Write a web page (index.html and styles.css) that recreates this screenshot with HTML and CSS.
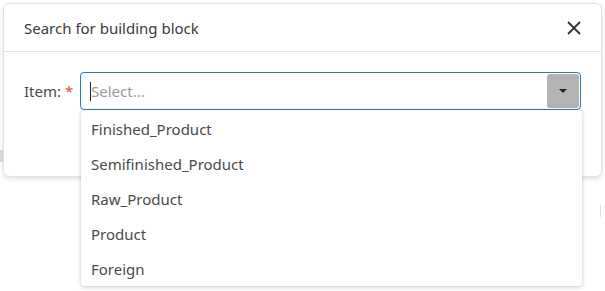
FILE: index.html
```html
<!DOCTYPE html>
<html lang="en">
<head>
    <meta charset="UTF-8">
    <title>Search for building block</title>
    <link rel="stylesheet" href="styles.css">
</head>
<body>
    <div class="backdrop">
        <span class="bg-mark bg-left"></span>
        <span class="bg-mark bg-right"></span>
        <div class="modal">
            <div class="modal-header">
                <h4>Search for building block</h4>
                <button class="close-btn" aria-label="Close">
                    <svg width="14" height="14" viewBox="0 0 14 14">
                        <path d="M1 1 L13 13 M13 1 L1 13" stroke="#333" stroke-width="1.8" fill="none"/>
                    </svg>
                </button>
            </div>
            <div class="modal-body">
                <label class="field-label">Item: <span class="req">*</span></label>
                <div class="select">
                    <div class="select-input">
                        <span class="caret-line"></span>
                        <span class="placeholder">Select...</span>
                    </div>
                    <div class="select-btn">
                        <span class="arrow"></span>
                    </div>
                    <ul class="select-menu">
                        <li>Finished_Product</li>
                        <li>Semifinished_Product</li>
                        <li>Raw_Product</li>
                        <li>Product</li>
                        <li>Foreign</li>
                    </ul>
                </div>
            </div>
        </div>
    </div>
</body>
</html>
```

FILE: styles.css
```css
body {
    margin: 0;
    font-family: "Noto Sans", "Open Sans", sans-serif;
    background-color: #FFF;
    color: #333;
}
.backdrop {
    position: relative;
    width: 605px;
    height: 291px;
    padding: 3px;
    box-sizing: border-box;
}
.bg-mark {
    position: absolute;
    background-color: #ddd;
}
.bg-left {
    left: 0;
    top: 150px;
    width: 3px;
    height: 12px;
}
.bg-right {
    left: 600px;
    top: 205px;
    width: 1px;
    height: 12px;
}
.modal {
    position: relative;
    width: 599px;
    height: 174px;
    box-sizing: border-box;
    background-color: #FFF;
    border: 1px solid #e2e2e2;
    border-radius: 6px;
    box-shadow: 0 2px 5px rgba(0, 0, 0, 0.12);
}
.modal-header {
    display: flex;
    align-items: center;
    justify-content: space-between;
    height: 47px;
    padding: 0 20px;
    border-bottom: 1px solid #e5e5e5;
}
.modal-header h4 {
    margin: 0;
    font-size: 15px;
    font-weight: normal;
    color: #3a3a3a;
}
.close-btn {
    border: none;
    background: none;
    padding: 0;
    width: 14px;
    height: 14px;
    display: flex;
}
.modal-body {
    display: flex;
    align-items: flex-start;
    padding: 20px 20px 0 20px;
}
.field-label {
    width: 56px;
    line-height: 38px;
    font-size: 15px;
    color: #4a4a4a;
}
.req {
    color: #d9534f;
}
.select {
    position: relative;
    flex: 1;
    height: 38px;
    box-sizing: border-box;
    border: 1px solid #2f78bd;
    border-radius: 4px;
    display: flex;
    align-items: center;
}
.select-input {
    flex: 1;
    display: flex;
    align-items: center;
    padding-left: 9px;
    font-size: 15px;
}
.caret-line {
    width: 1px;
    height: 19px;
    background-color: #222;
}
.placeholder {
    color: #9a9a9a;
}
.select-btn {
    width: 32px;
    height: 34px;
    margin-right: 1px;
    background-color: #b3b3b3;
    border-radius: 3px;
    display: flex;
    align-items: center;
    justify-content: center;
}
.arrow {
    width: 0;
    height: 0;
    border-left: 4px solid transparent;
    border-right: 4px solid transparent;
    border-top: 4px solid #222;
}
.select-menu {
    position: absolute;
    top: 37px;
    left: 0;
    right: -2px;
    margin: 0;
    padding: 2px 0 0 0;
    list-style: none;
    background-color: #FFF;
    border-radius: 4px;
    box-shadow: 0 1px 4px rgba(0, 0, 0, 0.22);
    height: 176px;
    box-sizing: border-box;
}
.select-menu li {
    height: 35px;
    line-height: 35px;
    padding-left: 10px;
    font-size: 15px;
    color: #4a4a4a;
}
```
